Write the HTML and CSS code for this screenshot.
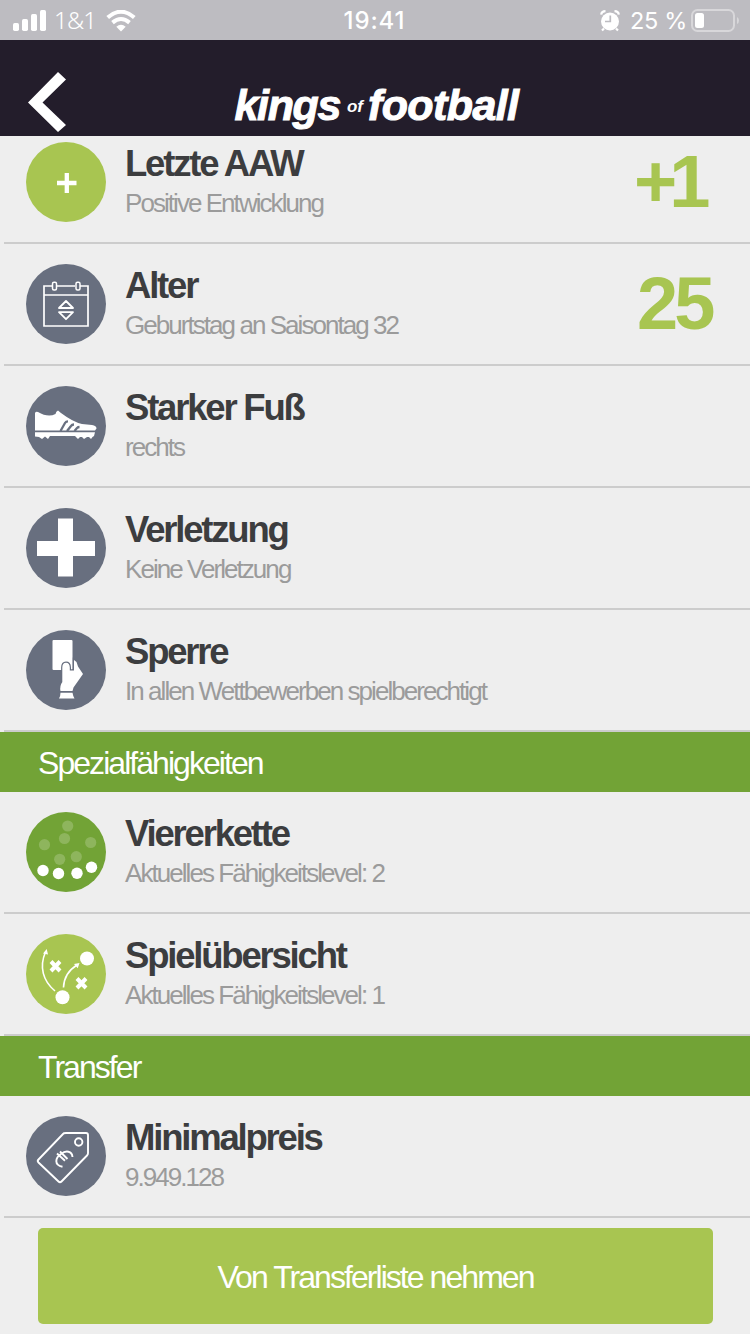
FILE: index.html
```html
<!DOCTYPE html>
<html lang="de">
<head>
<meta charset="utf-8">
<title>kings of football</title>
<link rel="stylesheet" href="styles.css">
</head>
<body>
<div class="screen">
  <div class="status">
    <div class="status-left">
      <svg class="signal" width="34" height="22" viewBox="0 0 34 22" fill="#fff"><rect x="0" y="13" width="6" height="8" rx="1.7"/><rect x="9" y="9" width="6" height="12" rx="1.7"/><rect x="18" y="4" width="6" height="17" rx="1.7"/><rect x="27" y="0" width="6" height="21" rx="1.7"/></svg>
      <span class="carrier">1&amp;1</span>
      <svg class="wifi" width="30" height="22" viewBox="0 0 30 22" fill="none" stroke="#fff"><path d="M1.7 7.6Q15-4.2 28.3 7.6" stroke-width="4"/><path d="M6.5 12.6Q15 5.4 23.500 12.6" stroke-width="4"/><path d="M10.300 16.700Q15 12.700 19.700 16.700L15 21.500Z" fill="#fff" stroke="none"/></svg>
    </div>
    <span class="clock">19:41</span>
    <div class="status-right">
      <svg width="20" height="22" viewBox="0 0 20 22"><circle cx="10" cy="11.500" r="9" fill="#fff"/><path d="M1.200 4.700Q1.500 1.300 5.500 1.200M18.800 4.700Q18.500 1.300 14.500 1.200M4 18.500L2 20.500M16 18.500L18 20.500" stroke="#fff" stroke-width="2.200" fill="none"/><path d="M10.300 5.500V11.500H5" fill="none" stroke="#bdbcc1" stroke-width="1.700"/></svg>
      <span class="percent">25 %</span>
      <svg width="48" height="24" viewBox="0 0 48 24"><rect x="1" y="1" width="42" height="21" rx="5.500" fill="none" stroke="#d8d7da" stroke-width="2"/><rect x="4" y="4" width="9" height="15" rx="2.500" fill="#fff"/><path d="M46 8Q48 9 48 11.500T46 15Z" fill="#d8d7da"/></svg>
    </div>
  </div>
  <header class="header">
    <svg class="back" width="38" height="60" viewBox="0 0 38 60"><path d="M30 0L38 7.500L14.500 30.500L38 53L30 60L0 30.500Z" fill="#fff"/></svg>
    <div class="logo"><span class="kings">kings</span><span class="of">of</span><span class="football">football</span></div>
  </header>
  <main class="list">
    <div class="row first">
      <svg class="icon" viewBox="0 0 80 80"><circle cx="40" cy="40" r="40" fill="#a8c551"/><path d="M40.800 31V51M31 41H50.500" stroke="#fff" stroke-width="4.300"/></svg>
      <div class="copy"><h2>Letzte AAW</h2><p>Positive Entwicklung</p></div>
      <b class="value plus">+1</b>
    </div>
    <div class="row">
      <svg class="icon" viewBox="0 0 80 80"><circle cx="40" cy="40" r="40" fill="#686f7f"/><g fill="none" stroke="#fff"><path d="M26 22H18V62H62V22H54M31 22H49M18 31H62" stroke-width="1.700"/><rect x="26.500" y="18.200" width="4" height="7.800" rx="1.500" stroke-width="1.500"/><rect x="50" y="18.200" width="4" height="7.800" rx="1.500" stroke-width="1.500"/><path d="M33 44H47L40 37ZM33 48.200H47L40 55.200Z" stroke-width="1.800" stroke-linejoin="round"/></g></svg>
      <div class="copy"><h2>Alter</h2><p>Geburtstag an Saisontag 32</p></div>
      <b class="value">25</b>
    </div>
    <div class="row">
      <svg class="icon" viewBox="0 0 80 80"><circle cx="40" cy="40" r="40" fill="#686f7f"/><path d="M9 44.500V27Q10 25 12 26Q22 32 29.500 28Q30 25 32 24.500L35 27Q47 36 56 38L66 39Q70.500 39.500 70.500 42.500L69 44.500Z" fill="#fff"/><path d="M9 46.300H69L68 50L66.500 51L65 53L63 51H61L58 53L56 51H54L52 53L49 50H24L22 53L19 50.500L16 53L13 51L9 50.500Z" fill="#fff"/><path d="M34.500 45L39 37Q40 35.300 42 35.300M41 45L45 40Q46 38.500 48 38.500M48.500 45L51 42Q52 41 53.500 41" fill="none" stroke="#686f7f" stroke-width="2.300"/></svg>
      <div class="copy"><h2>Starker Fuß</h2><p>rechts</p></div>
    </div>
    <div class="row">
      <svg class="icon" viewBox="0 0 80 80"><circle cx="40" cy="40" r="40" fill="#686f7f"/><path d="M32 10.500H47V33H69V48H47V68.500H32V48H11V33H32Z" fill="#fff"/></svg>
      <div class="copy"><h2>Verletzung</h2><p>Keine Verletzung</p></div>
    </div>
    <div class="row">
      <svg class="icon" viewBox="0 0 80 80"><circle cx="40" cy="40" r="40" fill="#686f7f"/><rect x="26.500" y="10" width="20" height="30" rx="1" fill="#fff"/><path d="M36.300 53V37.500Q36.300 32.700 40 32.700T43.800 37.500V40.500H48V30L50.500 32L52 36.500L57 44L47.500 57.500L46.500 61H34.500Q33.500 56 36.300 52Z" fill="#fff" stroke="#686f7f" stroke-width="2.400" paint-order="stroke"/><path d="M34.500 62.700H46.500Q47 66 48.500 68.500H33Q34.500 66 34.500 62.700Z" fill="#fff"/></svg>
      <div class="copy"><h2>Sperre</h2><p>In allen Wettbewerben spielberechtigt</p></div>
    </div>
    <h3 class="section">Spezialfähigkeiten</h3>
    <div class="row">
      <svg class="icon" viewBox="0 0 80 80"><circle cx="40" cy="40" r="40" fill="#72a336"/><g fill="#8eb55d"><circle cx="41.700" cy="14" r="5.600"/><circle cx="38.500" cy="26.500" r="5.600"/><circle cx="18.500" cy="32.700" r="5.600"/><circle cx="64.700" cy="30.500" r="5.600"/><circle cx="33.700" cy="47.300" r="5.600"/><circle cx="50.300" cy="44.700" r="5.600"/></g><g fill="#fff"><circle cx="17" cy="58.500" r="5.700"/><circle cx="32.500" cy="61.500" r="5.700"/><circle cx="51" cy="61.300" r="5.700"/><circle cx="65.500" cy="55.300" r="5.700"/></g></svg>
      <div class="copy"><h2>Viererkette</h2><p>Aktuelles Fähigkeitslevel: 2</p></div>
    </div>
    <div class="row">
      <svg class="icon" viewBox="0 0 80 80"><circle cx="40" cy="40" r="40" fill="#a8c551"/><circle cx="61" cy="24.500" r="7" fill="#fff"/><circle cx="36.500" cy="63.300" r="7" fill="#fff"/><g fill="none" stroke="#fff"><path d="M29 57C17 47 13 33 19.500 18M37.500 53.500Q38 39 51 31" stroke-width="1.600"/><path d="M25 27.500L34 37M34 27.500L25 37M51 44.500L60 54M60 44.500L51 54" stroke-width="4"/></g><path d="M20.700 15L22 20.500L17 19.500ZM53.500 29L51.700 34.300L48 30Z" fill="#fff"/></svg>
      <div class="copy"><h2>Spielübersicht</h2><p>Aktuelles Fähigkeitslevel: 1</p></div>
    </div>
    <h3 class="section">Transfer</h3>
    <div class="row">
      <svg class="icon" viewBox="0 0 80 80"><circle cx="40" cy="40" r="40" fill="#686f7f"/><g fill="none" stroke="#fff"><path d="M38 17.200Q39 17 40 17H60Q62 17 62 19V37Q62 38.500 61 39.500L35.500 65.500Q34 67 32.500 65.500L12.500 46.500Q11 45 12.500 43.500L37 18Z" stroke-width="1.900"/><circle cx="52.700" cy="26" r="3.700" stroke-width="1.900"/><path d="M46.500 41C46 35 40 34 35 38C29 42 28 49 36.500 50.700M31 37.500L39 44.700M34 35.500L41.500 43" stroke-width="1.900"/></g></svg>
      <div class="copy"><h2>Minimalpreis</h2><p>9.949.128</p></div>
    </div>
    <button class="action">Von Transferliste nehmen</button>
  </main>
</div>
</body>
</html>
```
FILE: styles.css
```css
* { box-sizing: border-box; }
body { margin: 0; background: #eee; font-family: "Liberation Sans", Arial, sans-serif; }
h2, h3, p { margin: 0; font-weight: 400; white-space: nowrap; }
.screen { width: 750px; height: 1334px; overflow: hidden; background: #eee; }

.status { height: 40px; padding: 0 11px 0 13px; background: #bdbcc1; color: #fff; display: grid; grid-template-columns: 1fr auto 1fr; align-items: center; font: 24px/40px Inter, sans-serif; }
.status-left { display: flex; align-items: center; }
.carrier { margin: -1px 10px 0 7px; font-family: "Noto Sans", sans-serif; font-weight: 300; letter-spacing: -.8px; }
.clock { font-weight: 500; letter-spacing: .9px; margin-right: 3px; }
.status-right { display: flex; align-items: center; justify-content: flex-end; }
.percent { margin: 1px 4px 0 10px; font-size: 23.500px; letter-spacing: -.3px; }

.header { height: 96px; padding: 32px 28px 0; background: #231d2b; color: #fff; display: grid; grid-template-columns: 38px 1fr 38px; }
.logo { display: flex; justify-content: center; align-items: baseline; padding: 7px 0 0 3px; font-size: 43px; line-height: 52px; font-weight: 700; font-style: italic; }
.kings, .football { -webkit-text-stroke: 1px #fff; }
.kings { letter-spacing: -1.400px; }
.football { letter-spacing: -.6px; }
.of { font-size: 17px; line-height: 20px; padding-bottom: 8px; margin: 0 5px 0 7px; align-self: flex-start; padding-top: 18px; }

.list { display: flow-root; }
.row { height: 122px; padding: 20px 0 0 26px; display: flex; align-items: flex-start; background: linear-gradient(#ccc, #ccc) 4px 100% / 100% 2px no-repeat; }
.row.first { height: 108px; padding-top: 6px; }
.icon { width: 80px; height: 80px; flex: none; }
.copy { margin-left: 19px; flex: 1; }
.copy h2 { font-size: 36.500px; line-height: 44px; font-weight: 700; letter-spacing: -2.200px; color: #3c3d3f; }
.copy p { font-size: 26px; line-height: 34px; letter-spacing: -1.950px; color: #9b9b9b; }
.value { width: 113px; font-size: 74px; line-height: 80px; letter-spacing: -4px; color: #a8c551; }
.value.plus { width: 116px; letter-spacing: -8px; }
.section { height: 60px; padding-left: 38px; background: #72a336; color: #fff; font-size: 32px; line-height: 63px; letter-spacing: -1.950px; }
.action { display: block; width: 675px; height: 96px; margin: 10px 0 0 38px; padding: 2px 0 0; border: 0; border-radius: 5px; background: #a8c551; color: #fff; font: 32px "Liberation Sans", Arial, sans-serif; letter-spacing: -1.950px; }
```
